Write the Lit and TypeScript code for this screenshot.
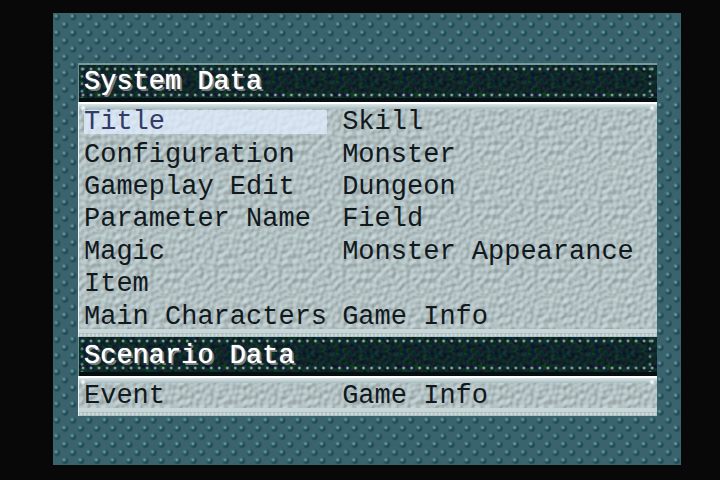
import { LitElement, html, css } from "lit";
import { customElement, property, state } from "lit/decorators.js";

interface Section {
  title: string;
  columns: string[][];
}

const SECTIONS: Section[] = [
  {
    title: "System Data",
    columns: [
      ["Title", "Configuration", "Gameplay Edit", "Parameter Name", "Magic", "Item", "Main Characters"],
      ["Skill", "Monster", "Dungeon", "Field", "Monster Appearance", "", "Game Info"],
    ],
  },
  { title: "Scenario Data", columns: [["Event"], ["Game Info"]] },
];

@customElement("menu-section")
export class MenuSection extends LitElement {
  @property({ attribute: false }) section!: Section;
  @property() selected = "";

  static styles = css`
    :host {
      display: flex;
      flex-direction: column;
    }
    .heading {
      margin: 0;
      box-sizing: border-box;
      height: 39px;
      padding: 0 5px;
      font-size: 27px;
      font-weight: 400;
      line-height: 38px;
      color: #fff;
      text-shadow: 0 0 1px #fff, 2px 2px #77807f;
      border-left: 1px solid #6f9395;
      box-shadow: inset 0 -4px #061012;
      background-color: #10292b;
      background-image:
        radial-gradient(circle at 4px 4px, #b4d4c6 0, #6b9085 1px, transparent 2px),
        radial-gradient(circle at 4px 4px, #b4d4c6 0, #6b9085 1px, transparent 2px),
        radial-gradient(circle at 4px 4px, #8fb5a8 0, #4f766e 1px, transparent 2px),
        radial-gradient(circle at 4px 4px, #8fb5a8 0, #4f766e 1px, transparent 2px),
        url("data:image/svg+xml,%3Csvg xmlns='http://www.w3.org/2000/svg' width='64' height='64'%3E%3Cfilter id='n' x='0' y='0' width='100%25' height='100%25' color-interpolation-filters='sRGB'%3E%3CfeTurbulence type='fractalNoise' baseFrequency='.25' numOctaves='2' seed='4' stitchTiles='stitch'/%3E%3CfeColorMatrix values='.16 0 0 0 -.02 0 .3 0 0 0 0 0 .28 0 .02 0 0 0 0 1'/%3E%3C/filter%3E%3Crect width='64' height='64' filter='url(%23n)'/%3E%3C/svg%3E");
      background-size: 8px 8px, 8px 8px, 8px 8px, 8px 8px, 64px 64px;
      background-repeat: round no-repeat, round no-repeat, no-repeat round, no-repeat round, repeat;
      background-position: 0 0, 0 27px, -1px 0, right 3px top 0, 0 0;
    }
    .first .heading {
      border-top: 2px solid #789c9c;
      line-height: 34px;
      background-position: 0 0, 0 26px, -1px 0, right 3px top 0, 0 0;
    }
    .wrap {
      display: flex;
      flex: 1;
      flex-direction: column;
    }
    .list {
      flex: 1;
      display: grid;
      grid-template-columns: 5fr 6fr;
      grid-auto-rows: 1fr;
      grid-auto-flow: column;
      align-items: center;
      box-sizing: border-box;
      min-height: 40px;
      padding: 2px 5px 4px;
      font-size: 27px;
      border-top: 2px solid #fff;
      border-left: 1px solid #e8f3f3;
      background-color: #b3c5c8;
      background-image:
        radial-gradient(circle at 4px 4px, #fff 0, #e7f2f2 1px, transparent 3px),
        radial-gradient(circle at 4px 4px, #fff 0, #e7f2f2 1px, transparent 3px),
        radial-gradient(circle at 2px 2px, #e2ecec 0, #a8bcbe 2px),
        linear-gradient(#dce7e8, #a9bcbf),
        linear-gradient(#c8d6d7, #c8d6d7),
        url("data:image/svg+xml,%3Csvg xmlns='http://www.w3.org/2000/svg' width='64' height='64'%3E%3Cfilter id='n' x='0' y='0' width='100%25' height='100%25' color-interpolation-filters='sRGB'%3E%3CfeTurbulence type='fractalNoise' baseFrequency='.2' numOctaves='1' seed='7' stitchTiles='stitch'/%3E%3CfeDiffuseLighting surfaceScale='1.1' diffuseConstant='1.06' lighting-color='%23c2d2d4'%3E%3CfeDistantLight azimuth='225' elevation='60'/%3E%3C/feDiffuseLighting%3E%3C/filter%3E%3Crect width='64' height='64' filter='url(%23n)'/%3E%3C/svg%3E");
      background-size: 8px 8px, 8px 8px, 4px 4px, 100% 5px, 100% 4px, 64px 64px;
      background-repeat: no-repeat, no-repeat, round no-repeat, no-repeat, no-repeat, repeat;
      background-position: 0 0, right 1px top 0, 0 100%, 0 0, 0 calc(100% - 4px), 0 0;
    }
    .tall .list {
      grid-template-rows: repeat(7, 1fr);
    }
    .item {
      justify-self: start;
      box-sizing: border-box;
      height: 24px;
      margin: 0;
      padding: 0;
      border: 0;
      background: none;
      font: inherit;
      line-height: 24px;
      text-align: left;
      white-space: nowrap;
      color: #12191d;
      cursor: pointer;
    }
    .current {
      width: 15ch;
      color: #343b68;
      background: rgba(225, 237, 255, 0.75);
    }
  `;

  private pick(name: string) {
    this.dispatchEvent(new CustomEvent("pick", { detail: name }));
  }

  render() {
    const { title, columns } = this.section;
    const tall = columns[0].length > 1;
    return html`
      <div class="wrap ${tall ? "first tall" : ""}">
        <h2 class="heading">${title}</h2>
        <div class="list">
          ${columns.flat().map((name) =>
            name
              ? html`<button
                  class="item ${name === this.selected ? "current" : ""}"
                  @click=${() => this.pick(name)}
                >${name}</button>`
              : html`<span></span>`
          )}
        </div>
      </div>
    `;
  }
}

@customElement("app-root")
export class AppRoot extends LitElement {
  @state() private selected = "Title";

  static styles = css`
    :host {
      display: block;
      font-family: "Liberation Mono", monospace;
    }
    .screen {
      display: flex;
      box-sizing: border-box;
      min-height: 100vh;
      padding: 13px 39px 15px 53px;
      background: #080808;
    }
    .backdrop {
      flex: 1;
      display: flex;
      box-sizing: border-box;
      padding: 50px 24px 49px 25px;
      background-color: #3a636d;
      background-image:
        radial-gradient(circle at 3px 3px, #86b9be 0, #4f858d 1px, transparent 3px),
        radial-gradient(circle at 11px 11px, #86b9be 0, #4f858d 1px, transparent 3px),
        radial-gradient(circle at 4px 4px, #1d434f 0, #1d434f 2px, transparent 4px),
        radial-gradient(circle at 12px 12px, #1d434f 0, #1d434f 2px, transparent 4px);
      background-size: 16px 16px;
      background-repeat: round;
    }
    .panel {
      flex: 1;
      display: flex;
      flex-direction: column;
    }
    .system {
      flex: 1;
    }
  `;

  private onPick(e: CustomEvent<string>) {
    this.selected = e.detail;
  }

  render() {
    return html`
      <main class="screen">
        <div class="backdrop">
          <nav class="panel">
            ${SECTIONS.map(
              (s, i) => html`<menu-section
                class=${i === 0 ? "system" : "scenario"}
                .section=${s}
                .selected=${this.selected}
                @pick=${this.onPick}
              ></menu-section>`
            )}
          </nav>
        </div>
      </main>
    `;
  }
}
